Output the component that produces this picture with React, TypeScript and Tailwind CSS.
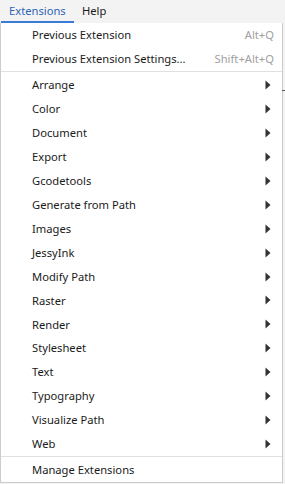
import React from "react";

const subItems = [
  "Arrange",
  "Color",
  "Document",
  "Export",
  "Gcodetools",
  "Generate from Path",
  "Images",
  "JessyInk",
  "Modify Path",
  "Raster",
  "Render",
  "Stylesheet",
  "Text",
  "Typography",
  "Visualize Path",
  "Web",
];

function Arrow() {
  return (
    <svg width="6" height="10" viewBox="0 0 6 10" className="block">
      <path d="M0.5 0.5 L5.5 5 L0.5 9.5 Z" fill="#333333" />
    </svg>
  );
}

export default function App() {
  return (
    <div
      className="w-[285px] h-[484px] bg-[#f3f3f3] relative overflow-hidden text-[11.2px] text-[#1a1a1a]"
      style={{ fontFamily: '"Noto Sans", sans-serif' }}
    >
      <div className="flex h-[23px] items-start">
        <div className="relative h-[23px] w-[74px] pl-[9px] pt-[3px] text-[#2f64b8]">
          Extensions
          <div className="absolute left-[1px] right-0 bottom-0 h-[2px] bg-[#3a7bd5]" />
        </div>
        <div className="pl-[8px] pt-[3px] text-[#1a1a1a]">Help</div>
      </div>
      <div className="absolute left-[282px] top-[90px] w-[3px] h-px bg-[#555]" />
      <div className="w-[283px] h-[460px] bg-white border border-t-0 border-[#cccccc] flex flex-col">
        <div className="flex items-center h-[24px] pl-[31px] pr-[8px] pt-[1px]">
          <span className="flex-1">Previous Extension</span>
          <span className="text-[#a0a0a0]">Alt+Q</span>
        </div>
        <div className="flex items-center h-[24px] pl-[31px] pr-[8px] pt-[1px]">
          <span className="flex-1">Previous Extension Settings...</span>
          <span className="text-[#a0a0a0]">Shift+Alt+Q</span>
        </div>
        <div className="h-px bg-[#e0e0e0] mb-[1px]" />
        {subItems.map((s) => (
          <div key={s} className="flex items-center h-[24px] pl-[31px] pr-[11px]">
            <span className="flex-1 pt-[1px]">{s}</span>
            <Arrow />
          </div>
        ))}
        <div className="h-px bg-[#e0e0e0] mb-[1px]" />
        <div className="flex items-center h-[24px] pl-[31px] pt-[1px]">
          <span>Manage Extensions</span>
        </div>
      </div>
    </div>
  );
}
